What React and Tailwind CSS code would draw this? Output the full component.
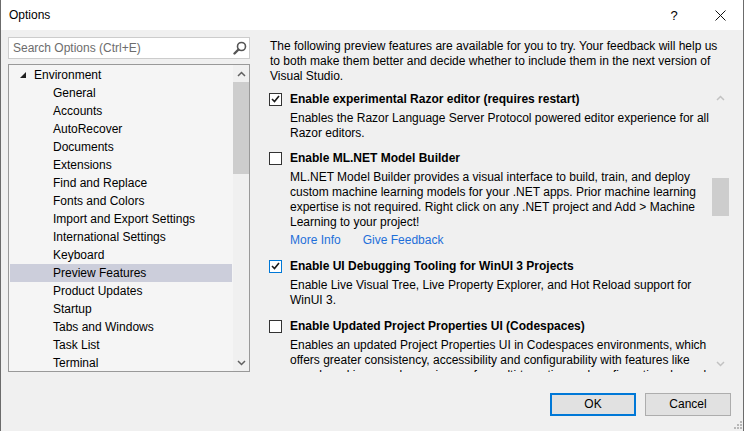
import React from 'react';

const treeItems = [
  'General',
  'Accounts',
  'AutoRecover',
  'Documents',
  'Extensions',
  'Find and Replace',
  'Fonts and Colors',
  'Import and Export Settings',
  'International Settings',
  'Keyboard',
  'Preview Features',
  'Product Updates',
  'Startup',
  'Tabs and Windows',
  'Task List',
  'Terminal',
];

const features = [
  {
    title: 'Enable experimental Razor editor (requires restart)',
    checked: true,
    lines: [
      'Enables the Razor Language Server Protocol powered editor experience for all',
      'Razor editors.',
    ],
    gap: 'mt-0',
  },
  {
    title: 'Enable ML.NET Model Builder',
    checked: false,
    lines: [
      'ML.NET Model Builder provides a visual interface to build, train, and deploy',
      'custom machine learning models for your .NET apps. Prior machine learning',
      'expertise is not required. Right click on any .NET project and Add > Machine',
      'Learning to your project!',
    ],
    links: true,
    gap: 'mt-[8px]',
  },
  {
    title: 'Enable UI Debugging Tooling for WinUI 3 Projects',
    checked: true,
    focused: true,
    lines: [
      'Enable Live Visual Tree, Live Property Explorer, and Hot Reload support for',
      'WinUI 3.',
    ],
    gap: 'mt-[9px]',
  },
  {
    title: 'Enable Updated Project Properties UI (Codespaces)',
    checked: false,
    lines: [
      'Enables an updated Project Properties UI in Codespaces environments, which',
      'offers greater consistency, accessibility and configurability with features like',
      'search and improved experiences for multi-targeting and configuration-dependent',
    ],
    gap: 'mt-[9px]',
  },
];

function Checkbox({ checked, focused }) {
  return (
    <div
      className={`w-[13px] h-[13px] shrink-0 bg-white border flex items-center justify-center ${
        focused ? 'border-[#0078d7]' : 'border-[#333333]'
      }`}
    >
      {checked && (
        <svg width="9" height="8" viewBox="0 0 9 8">
          <path d="M1 4 L3.5 6.5 L8 1" fill="none" stroke="#1a1a1a" strokeWidth="1.6" />
        </svg>
      )}
    </div>
  );
}

function Chevron({ up }) {
  return (
    <svg width="9" height="6" viewBox="0 0 9 6">
      <path d={up ? 'M1 5 L4.5 1.5 L8 5' : 'M1 1 L4.5 4.5 L8 1'} fill="none" stroke="currentColor" strokeWidth="1.5" />
    </svg>
  );
}

export default function App() {
  return (
    <div className="w-[744px] h-[431px] flex flex-col overflow-hidden bg-[#f0f0f0] border-x border-[#6b6b6b] text-[12px] leading-[15px] text-black font-['Segoe_UI','Liberation_Sans',sans-serif]">
      {/* title bar */}
      <div className="h-[30px] shrink-0 bg-white flex items-center pl-[8px]">
        <span className="text-[12px]">Options</span>
        <div className="flex-1" />
        <span className="w-[46px] text-center text-[13px]">?</span>
        <div className="w-[46px] flex justify-center">
          <svg width="11" height="11" viewBox="0 0 11 11">
            <path d="M0.5 0.5 L10.5 10.5 M10.5 0.5 L0.5 10.5" stroke="#111" strokeWidth="1" />
          </svg>
        </div>
      </div>

      {/* body */}
      <div className="h-[342px] shrink-0 flex">
        {/* left column */}
        <div className="w-[249px] shrink-0 pl-[7px] pt-[7px] flex flex-col gap-[5px]">
          <div className="h-[22px] bg-white border border-[#cccccc] flex items-center pl-[4px] pr-[2px]">
            <span className="flex-1 text-[#6d6d6d]">Search Options (Ctrl+E)</span>
            <svg width="14" height="14" viewBox="0 0 14 14">
              <circle cx="8.5" cy="5.5" r="4" fill="none" stroke="#555" strokeWidth="1.6" />
              <path d="M5.5 8.5 L1.5 12.5" stroke="#555" strokeWidth="2.4" strokeLinecap="round" />
            </svg>
          </div>
          <div className="h-[308px] bg-[#f5f5f5] border border-[#999999] flex">
            <div className="flex-1 min-w-0 pl-[1px] pt-[1px] pr-[1px] overflow-hidden">
              <div className="h-[18px] flex items-center">
                <svg className="ml-[10px] mr-[8px]" width="6" height="6" viewBox="0 0 6 6">
                  <polygon points="6,0 6,6 0,6" fill="#1e1e1e" />
                </svg>
                <span>Environment</span>
              </div>
              {treeItems.map((item) => (
                <div
                  key={item}
                  className={`h-[18px] flex items-center pl-[43px] whitespace-nowrap ${
                    item === 'Preview Features' ? 'bg-[#cccedb]' : ''
                  }`}
                >
                  {item}
                </div>
              ))}
            </div>
            <div className="w-[16px] shrink-0 bg-[#f0f0f0] flex flex-col items-center text-[#606060]">
              <div className="h-[17px] flex items-center justify-center">
                <Chevron up />
              </div>
              <div className="w-full h-[92px] bg-[#cdcdcd]" />
              <div className="flex-1" />
              <div className="h-[17px] flex items-center justify-center">
                <Chevron />
              </div>
            </div>
          </div>
        </div>

        {/* right column */}
        <div className="flex-1 min-w-0 flex flex-col pt-[9px]">
          <div className="pl-[20px] whitespace-nowrap">
            <div>The following preview features are available for you to try. Your feedback will help us</div>
            <div>to both make them better and decide whether to include them in the next version of</div>
            <div>Visual Studio.</div>
          </div>
          <div className="flex-1 flex min-h-0 pt-[5px]">
            <div className="flex-1 min-w-0 overflow-hidden pl-[19px] pt-[1px]">
              {features.map((f) => (
                <div key={f.title} className={f.gap}>
                  <div className="h-[18px] flex items-center">
                    <Checkbox checked={f.checked} focused={f.focused} />
                    <span className="ml-[8px] font-bold whitespace-nowrap">{f.title}</span>
                  </div>
                  <div className="pl-[21px] mt-[3px] whitespace-nowrap">
                    {f.lines.map((l) => (
                      <div key={l}>{l}</div>
                    ))}
                    {f.links && (
                      <div className="mt-[3px] flex gap-[22px] text-[#1e6fd9]">
                        <span>More Info</span>
                        <span>Give Feedback</span>
                      </div>
                    )}
                  </div>
                </div>
              ))}
            </div>
            <div className="w-[17px] shrink-0 mr-[14px] flex flex-col items-center text-[#c2c2c2]">
              <div className="h-[17px] flex items-center justify-center">
                <Chevron up />
              </div>
              <div className="w-full h-[38px] mt-[72px] bg-[#cdcdcd]" />
              <div className="flex-1" />
              <div className="h-[17px] flex items-center justify-center">
                <Chevron />
              </div>
            </div>
          </div>
        </div>
      </div>

      {/* footer */}
      <div className="flex-1 flex items-start justify-end gap-[9px] pt-[21px] pr-[12px] relative">
        <button className="w-[86px] h-[23px] bg-[#e1e1e1] border-2 border-[#0078d7] text-[12px]">OK</button>
        <button className="w-[86px] h-[23px] bg-[#e1e1e1] border border-[#adadad] text-[12px]">Cancel</button>
        <svg className="absolute right-[1px] bottom-[2px]" width="8" height="8" viewBox="0 0 8 8">
          <rect x="6" y="0" width="2" height="2" fill="#b8b8b8" />
          <rect x="3" y="3" width="2" height="2" fill="#b8b8b8" />
          <rect x="6" y="3" width="2" height="2" fill="#b8b8b8" />
          <rect x="0" y="6" width="2" height="2" fill="#b8b8b8" />
          <rect x="3" y="6" width="2" height="2" fill="#b8b8b8" />
          <rect x="6" y="6" width="2" height="2" fill="#b8b8b8" />
        </svg>
      </div>
    </div>
  );
}
